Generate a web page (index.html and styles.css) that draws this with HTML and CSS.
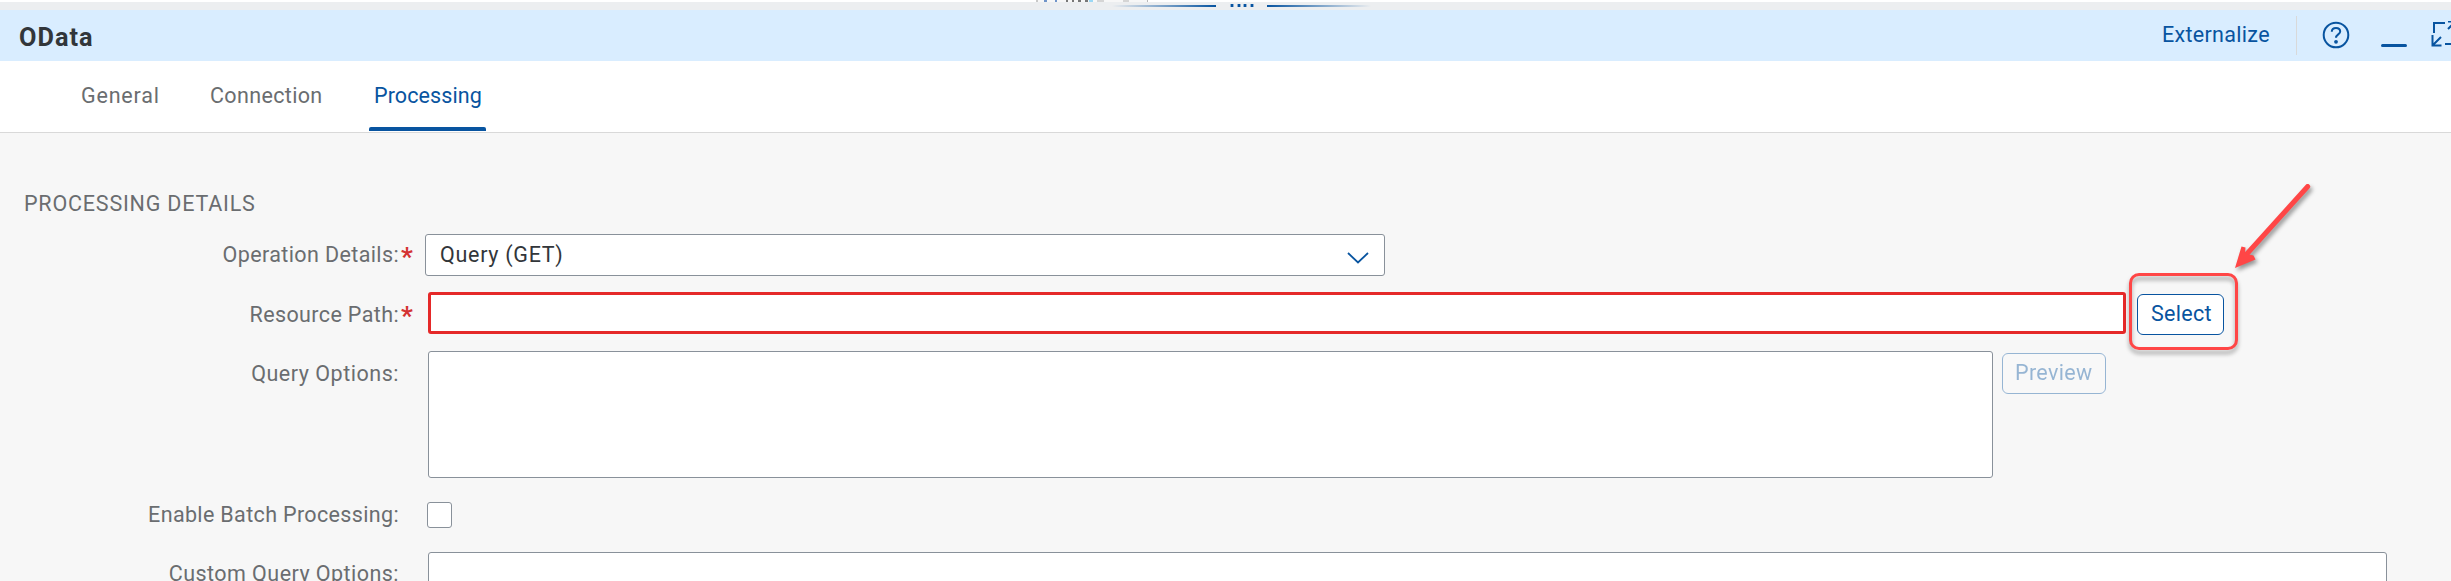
FILE: index.html
```html
<!DOCTYPE html>
<html lang="en">
<head>
<meta charset="utf-8">
<title>OData</title>
<link rel="stylesheet" href="styles.css">
</head>
<body>
<div class="canvas-edge"><span class="canvas-fragment"></span></div>
<div class="splitter">
  <span class="splitter-line splitter-line-left"></span>
  <span class="splitter-grip"><i></i><i></i><i></i><i></i></span>
  <span class="splitter-line splitter-line-right"></span>
</div>
<header class="header">
  <h1 class="title"><span>OData</span></h1>
  <div class="actions">
    <a class="externalize">Externalize</a>
    <span class="divider"></span>
    <svg class="icon-help" width="28" height="28" viewBox="0 0 28 28"><circle cx="14" cy="14" r="12.3"/><path d="M9.800 10.800C9.800 8.200 11.500 7 14 7s4.200 1.300 4.200 3.500c0 2.800-4.200 3-4.200 6.300"/><circle class="dot" cx="14" cy="20.800" r="1.900"/></svg>
    <span class="icon-minimize"></span>
    <svg class="icon-full" width="20" height="28" viewBox="0 0 20 28"><path d="M3 12V2h11M14 23h10M1.500 14v10.500h9M1.500 24.500l8.500-8.500M17 8l7-7M17 .5h7"/></svg>
  </div>
</header>
<nav class="tabs">
  <a class="tab tab-general"><span>General</span></a>
  <a class="tab tab-connection"><span>Connection</span></a>
  <a class="tab tab-processing active"><span>Processing</span></a>
</nav>
<main class="content">
  <h2 class="section-title"><span>PROCESSING DETAILS</span></h2>
  <div class="row row-operation">
    <label class="label"><span class="t-operation">Operation Details:</span></label><b class="required">*</b>
    <div class="select"><span class="t-get">Query (GET)</span><svg width="22" height="12" viewBox="0 0 22 12"><path d="M1 1l10 9.500L21 1"/></svg></div>
  </div>
  <div class="row row-resource">
    <label class="label"><span class="t-resource">Resource Path:</span></label><b class="required">*</b>
    <div class="input input-error"></div>
    <div class="select-wrap"><button class="button"><span class="t-select">Select</span></button>
      <div class="highlight"></div>
      <svg class="arrow" width="100" height="110" viewBox="0 0 100 110"><path class="shaft" d="M87.700 11.500L25 81"/><path class="head" d="M15 93l6.500-21.500 4 1-.5 6 8.500 2 2 4z"/></svg>
    </div>
  </div>
  <div class="row row-query">
    <label class="label"><span class="t-query">Query Options:</span></label><b class="required"></b>
    <div class="textarea"></div>
    <button class="button button-disabled"><span class="t-preview">Preview</span></button>
  </div>
  <div class="row row-batch">
    <label class="label"><span class="t-batch">Enable Batch Processing:</span></label><b class="required"></b>
    <div class="checkbox"></div>
  </div>
  <div class="row row-custom">
    <label class="label"><span class="t-custom">Custom Query Options:</span></label><b class="required"></b>
    <div class="input input-custom"></div>
  </div>
</main>
</body>
</html>
```
FILE: styles.css
```css
* { box-sizing: border-box; }
html, body { margin: 0; height: 581px; overflow: hidden; }
body { background: #f7f7f7; color: #6a6d70; font: 21.5px/30px Roboto, sans-serif; }
h1, h2 { margin: 0; font-weight: 400; font-size: inherit; }
svg { display: block; fill: none; stroke: #0854a0; stroke-width: 2; }
.canvas-edge { height: 2px; background: #fff; }
.canvas-fragment { display: block; width: 112px; height: 2px; margin-left: 1036px; background: linear-gradient(90deg, #c8c8c8 0 2px, #f7f7f7 2px 8px, #6f94c9 8px 11px, #f7f7f7 11px 19px, #6f94c9 19px 21px, #f7f7f7 21px 30px, #777 30px 32px, #f7f7f7 32px 36px, #777 36px 38px, #f7f7f7 38px 42px, #777 42px 45px, #f7f7f7 45px 49px, #777 49px 52px, #f7f7f7 52px 53px, #9bd8f5 53px 57px, #f7f7f7 57px 61px, #d5d5d5 61px 68px, #f7f7f7 68px 87px, #d5d5d5 87px 93px, #f7f7f7 93px 111px, #b8b8b8 111px); }
.splitter { display: flex; height: 8px; padding: 2px 0 0 1112px; background: #eceef0; }
.splitter-line { width: 104px; height: 2px; margin-top: 1px; background: linear-gradient(90deg, #eceef0, #0854a0); }
.splitter-line-right { background: linear-gradient(270deg, #eceef0, #0854a0); }
.splitter-grip { display: flex; gap: 2.500px; width: 51px; padding-left: 14px; }
.splitter-grip i { width: 4px; height: 3px; background: #0854a0; border: solid #8fb0d2; border-width: 0 1px; }
.header { display: flex; justify-content: space-between; height: 51px; background: #d9edff; white-space: nowrap; }
.title { padding: 13px 0 0 19px; color: #32363a; font-weight: 700; font-size: 25.300px; letter-spacing: 1px; }
.actions { display: flex; width: 289px; flex: none; color: #0854a0; }
.externalize { width: 134px; padding-top: 10px; letter-spacing: .3px; }
.divider { width: 1px; height: 39px; margin-top: 6px; background: #d9d9d9; }
.icon-help { margin: 11px 0 0 25px; }
.icon-help .dot { fill: #0854a0; stroke: none; }
.icon-minimize { flex: none; width: 26px; height: 3px; margin: 34px 0 0 31px; border-radius: 2px; background: #0854a0; }
.icon-full { flex: none; margin: 11px 0 0 24px; }
.tabs { display: flex; gap: 40px; height: 72px; padding-left: 76px; background: #fff; border-bottom: 1px solid #d9d9d9; white-space: nowrap; }
.tab { height: 70px; padding: 20px 5px 0; }
.tab-general { width: 89px; letter-spacing: .8px; }
.tab-connection { width: 124px; letter-spacing: .35px; }
.tab-processing { width: 117px; letter-spacing: .1px; }
.tab.active { position: relative; color: #0854a0; }
.tab.active::after { content: ""; position: absolute; left: 0; bottom: 0; width: 100%; height: 4px; border-radius: 2px 2px 0 0; background: #0854a0; }
.content { height: 448px; overflow: hidden; padding-top: 54px; white-space: nowrap; }
.section-title { height: 47px; padding: 2px 0 0 24px; letter-spacing: .8px; }
.row { display: flex; align-items: flex-start; }
.row-operation { height: 58px; }
.row-resource { height: 59px; }
.row-query { height: 151px; }
.row-batch { height: 50px; }
.row-custom { height: 29px; }
.label { width: 399px; padding-top: 6px; text-align: right; }
.row-resource .label, .row-query .label { padding-top: 8px; }
.row-batch .label { padding-top: 0; margin-top: -2px; }
.row-custom .label { padding-top: 7px; }
.t-operation { letter-spacing: .38px; }
.t-resource { letter-spacing: .38px; }
.t-query { letter-spacing: .52px; }
.t-batch { letter-spacing: .35px; }
.t-custom { letter-spacing: .45px; }
.t-get { letter-spacing: .7px; }
.t-select { letter-spacing: .3px; }
.t-preview { letter-spacing: .35px; }
.required { width: 29px; padding: 8px 0 0 2px; color: #d43333; font-size: 26px; }
.row-resource .required { padding-top: 9px; }
.row-operation .required { width: 26px; }
.select { display: flex; justify-content: space-between; width: 960px; height: 42px; padding: 5px 15px 0 14px; border: 1px solid #89919a; border-radius: 3px; background: #fff; color: #32363a; }
.select svg { margin-top: 12px; stroke-width: 1.800; }
.input, .textarea { border: 1px solid #89919a; border-radius: 3px; background: #fff; }
.input-error { width: 1698px; height: 42px; border: 3px solid #e52929; }
.textarea { width: 1565px; height: 127px; }
.input-custom { width: 1959px; height: 42px; }
.checkbox { width: 25px; height: 26px; margin-left: -1px; border: 1px solid #89919a; border-radius: 3px; background: #fff; }
.button { width: 87px; height: 41px; padding: 0 0 1px 13px; border: 1px solid #0854a0; border-radius: 6px; background: #fff; color: #0854a0; font: inherit; text-align: left; }
.select-wrap { position: relative; margin: 2px 0 0 11px; height: 41px; }
.highlight { position: absolute; left: -8px; top: -21px; width: 109px; height: 77px; border: 3px solid #ff4646; border-radius: 10px; filter: drop-shadow(0 4px 2px rgba(0,0,0,.35)); }
.arrow { position: absolute; left: 83px; top: -119px; filter: drop-shadow(2px 3px 2px rgba(0,0,0,.4)); overflow: visible; }
.arrow .shaft { stroke: #ff4646; stroke-width: 5; stroke-linecap: round; }
.arrow .head { fill: #ff4646; stroke: none; }
.button-disabled { width: 104px; margin: 2px 0 0 9px; padding-left: 12px; background: #fafafa; opacity: .4; }
```
